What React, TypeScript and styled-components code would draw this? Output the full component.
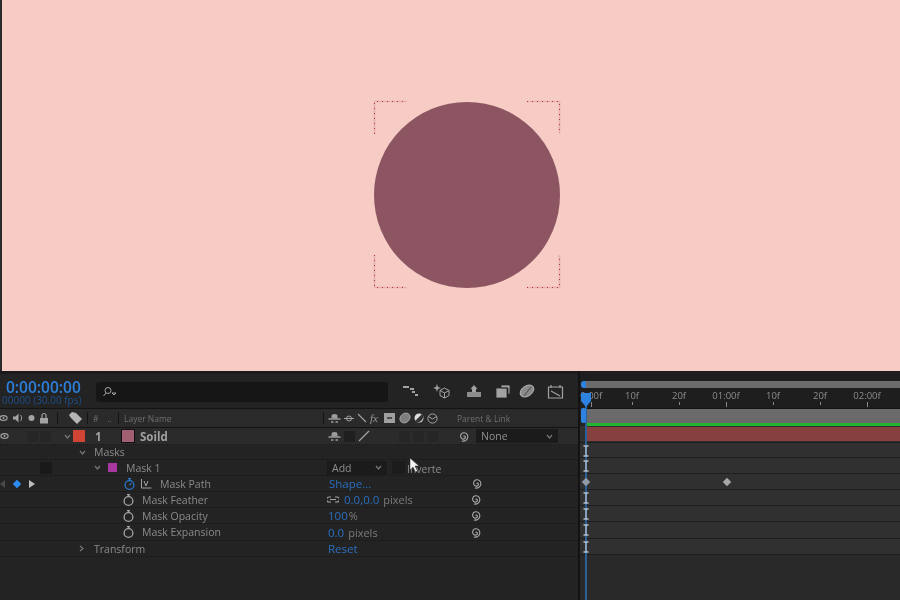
import React from 'react'
import styled, { createGlobalStyle } from 'styled-components'

const GlobalStyle = createGlobalStyle`
html, body { margin: 0; padding: 0; background: #232323; }
#root { width: 900px; height: 600px; overflow: hidden; }
`

const Page = styled.div`display: flex; flex-direction: column; width: 900px; height: 600px; font-family: "Open Sans", "Liberation Sans", sans-serif; color: #9b9b9b; overflow: hidden;`

const Viewer = styled.div`height: 371px; background: #f6ccc5; border-left: 2px solid #2a2a2a; display: flex; align-items: flex-start; padding: 101px 0 0 372px; box-sizing: border-box; flex: none;`
const Stage = styled.div`position: relative; width: 186px; height: 187px;`
const Circle = styled.div`width: 186px; height: 186px; margin-top: 1px; border-radius: 50%; background: #8c5561;`
const Brackets = styled.svg`position: absolute; left: 0; top: 0; overflow: visible;`

const Bottom = styled.div`flex: 1; display: flex; min-height: 0; background: #232323; filter: blur(0.4px);`
const LeftPanel = styled.div`width: 578px; flex: none; display: flex; flex-direction: column;`
const Divider = styled.div`width: 2px; flex: none; background: #131313;`
const RightPanel = styled.div`flex: 1; display: flex; flex-direction: column; position: relative; min-width: 0;`

const Toolbar = styled.div`height: 37px; flex: none; display: flex; align-items: flex-start; background: #232323; box-shadow: inset 0 3px 0 #1b1b1b;`
const TimeBox = styled.div`width: 96px; flex: none; padding: 8px 0 0 2px; box-sizing: border-box; display: flex; flex-direction: column;`
const TimeCode = styled.div`font-size: 15.5px; line-height: 16px; font-weight: 600; color: #2b80dc; padding-left: 4px; white-space: nowrap;`
const Frames = styled.div`font-size: 10px; line-height: 11px; color: #1d4f8c; white-space: nowrap;`
const Search = styled.div`width: 292px; height: 20px; margin-top: 11px; flex: none; border-radius: 3px; background: #161616; display: flex; align-items: center; padding-left: 6px; box-sizing: border-box;`
const ToolIcons = styled.div`display: flex; align-items: center; height: 18px; margin-top: 11px; padding-left: 6px;`
const ToolSlot = styled.div<{ $w: number }>`width: ${p => p.$w}px; flex: none; display: flex; justify-content: center;`

const HeaderRow = styled.div`height: 18px; flex: none; display: flex; align-items: center; background: #2a2a2a; border-top: 1px solid #131313; border-bottom: 1px solid #131313; font-size: 8.5px; color: #6f6f6f;`
const Slot = styled.div<{ $w: number; $pad?: number; $gap?: number }>`width: ${p => p.$w}px; flex: none; box-sizing: border-box; padding-left: ${p => p.$pad ?? 0}px; gap: ${p => p.$gap ?? 0}px; display: flex; align-items: center; white-space: nowrap;`
const Sep = styled.div`width: 1px; height: 12px; background: #141414; flex: none;`
const EyeClip = styled.div`margin-left: -1px; display: flex;`
const FxLabel = styled.span`font-style: italic; font-size: 11px; font-family: "Liberation Serif", serif; color: #9a9a9a; width: 11px;`

const Row = styled.div<{ $h?: number; $top?: boolean }>`height: ${p => p.$h ?? 16}px; flex: none; display: flex; align-items: center; box-sizing: border-box; border-bottom: 1px dotted #171717; font-size: 10.5px; color: #8f8f8f; background: ${p => (p.$top ? '#2b2b2b' : '#232323')};`
const Name = styled.span<{ $bold?: boolean }>`font-weight: ${p => (p.$bold ? 700 : 400)}; color: ${p => (p.$bold ? '#a0a0a0' : '#8b8b8b')}; font-size: ${p => (p.$bold ? 11.5 : 10.5)}px;`
const InvertLabel = styled(Name)`margin: 3px 0 0 2px;`
const Blue = styled.span`color: #2a6fc0; font-size: 11.5px;`
const Dim = styled.span<{ $gap?: number }>`color: #7c7c7c; margin-left: ${p => p.$gap ?? 4}px; font-size: 11px;`
const Box = styled.div<{ $c?: string; $s?: number }>`width: ${p => p.$s ?? 11}px; height: ${p => p.$s ?? 11}px; background: ${p => p.$c ?? '#1f1f1f'}; flex: none;`
const Swatch = styled(Box)`outline: 1px solid #111;`
const ActiveKey = styled(Box)`transform: rotate(45deg);`
const Dropdown = styled.div<{ $w: number }>`width: ${p => p.$w}px; height: 14px; flex: none; background: #1b1b1b; display: flex; align-items: center; justify-content: space-between; padding: 0 5px; box-sizing: border-box; color: #8f8f8f;`
const Cursor = styled.svg`position: absolute; left: 409px; top: 457px;`

const Scrubber = styled.div`height: 37px; flex: none; display: flex; flex-direction: column; background: #1e1e1e; padding-top: 10px; box-sizing: border-box;`
const NavBar = styled.div`height: 7px; flex: none; margin-left: 1px; background: #6b6b6b; border-left: 5px solid #2e83e0; border-radius: 3px 0 0 3px;`
const Ruler = styled.div`flex: 1; display: flex; overflow: hidden; font-size: 9.5px; color: #8d8d8d;`
const Tick = styled.div<{ $long?: boolean }>`width: 47px; flex: none; display: flex; flex-direction: column; align-items: center; line-height: 13px; margin-top: 1px;
&::after { content: ""; width: 1px; height: ${p => (p.$long ? 5 : 3)}px; background: #8a8a8a; }`
const FirstTick = styled(Tick)`width: 28.5px; padding-right: 6px; box-sizing: border-box;`
const WorkRow = styled.div`height: 18px; flex: none; background: #6a6a6a; border-top: 1px solid #131313; box-sizing: border-box; display: flex; flex-direction: column; justify-content: flex-end; margin-left: 6px;`
const GreenLine = styled.div`height: 3px; background: #22b534;`
const Track = styled.div<{ $h?: number }>`height: ${p => p.$h ?? 16}px; flex: none; background: #303030; border-bottom: 1px solid #1d1d1d; box-sizing: border-box; display: flex; position: relative; padding-left: 6px;`
const LayerBar = styled.div`flex: 1; background: #86403e; margin: 1px 0;`
const Playhead = styled.div`position: absolute; left: 5px; top: 22px; bottom: 0; width: 2px; background: #2b5f97;`
const PlayheadTop = styled.svg`position: absolute; left: 0; top: 22px;`
const WorkHandle = styled.div`position: absolute; left: 1px; top: 37px; width: 5px; height: 15px; background: #2e83e0; border-radius: 2px;`
const Lane = styled.div`flex: 1; background: #292929;`
const Beam = styled.svg`position: absolute; left: 3px; top: 2px; z-index: 1;`
const Key = styled.div<{ $x: number; $c?: string }>`position: absolute; left: ${p => p.$x}px; top: 5px; width: 6px; height: 6px; background: ${p => p.$c ?? '#a8a8a8'}; transform: rotate(45deg); z-index: 1;`

const Ic = ({ w = 14, h = 14, children, vb }: { w?: number; h?: number; vb?: string; children: React.ReactNode }) => (
  <svg width={w} height={h} viewBox={vb ?? `0 0 ${w} ${h}`} fill="none" stroke="#a3a3a3" strokeWidth="1.2" style={{ flex: 'none' }}>
    {children}
  </svg>
)

const Eye = () => (
  <Ic w={9} h={8}><ellipse cx="4.5" cy="4" rx="3.6" ry="2.4" /><circle cx="4.5" cy="4" r="1" fill="#a3a3a3" stroke="none" /></Ic>
)
const Chevron = ({ open = true }: { open?: boolean }) => (
  <Ic w={7} h={7}>{open ? <path d="M1 2l2.500 3L6 2" stroke="#777" /> : <path d="M2 1l3 2.500L2 6" stroke="#777" />}</Ic>
)
const Spiral = () => (
  <Ic w={13} h={13}><path d="M6.500 6.500c1-1 2.500 0 1.800 1.600-.8 1.600-4 1.400-4.600-.9C3 4.700 5 2.500 7.500 2.800c2.700.4 4 3 3 5.600-.9 2.200-3.400 3-5.600 2.600" stroke="#a8a8a8" strokeWidth="1.100" /></Ic>
)
const Stopwatch = ({ active = false }: { active?: boolean }) => {
  const c = active ? '#2a78cf' : '#a5a5a5'
  return (
    <Ic w={13} h={14}>
      <circle cx="6.500" cy="8" r="4.400" stroke={c} strokeWidth="1.300" />
      <path d="M5 1.600h3M6.500 2v1.600" stroke={c} />
      {active && <path d="M6.500 8l1.800-1.800" stroke={c} />}
    </Ic>
  )
}
const Shy = () => (
  <Ic w={13} h={10}>
    <path d="M3.500 5.500V3Q3.500 1 6.500 1T9.500 3V5.500z" fill="#9c9c9c" stroke="none" />
    <path d="M.5 6h12M3 9h2.500M7.500 9H10" stroke="#9c9c9c" strokeWidth="1.300" />
  </Ic>
)
const IBeam = () => (
  <Beam width="6" height="12" viewBox="0 0 6 12"><path d="M.5 1h5M.5 11h5M3 1v10" stroke="#b4c0cc" strokeWidth="1.300" /></Beam>
)

const rulerLabels = ['10f', '20f', '01:00f', '10f', '20f', '02:00f']

export default function App() {
  return (
    <Page>
      <GlobalStyle />
      <Viewer>
        <Stage>
          <Circle />
          <Brackets width="186" height="187" fill="none">
            <path d="M.5 33V.5H33M153 .5h32.500V33M.5 154v32.500H33M153 186.500h32.500V154" stroke="#dc9ea2" strokeWidth="1.600" opacity=".6" />
            <path d="M.5 33V.5H33M153 .5h32.500V33M.5 154v32.500H33M153 186.500h32.500V154" stroke="#b8303f" strokeWidth="1" strokeDasharray="1 4" />
          </Brackets>
        </Stage>
      </Viewer>
      <Bottom>
        <LeftPanel>
          <Toolbar>
            <TimeBox>
              <TimeCode>0:00:00:00</TimeCode>
              <Frames>00000 (30.00 fps)</Frames>
            </TimeBox>
            <Search>
              <Ic w={16} h={12}><circle cx="6" cy="4.500" r="3" strokeWidth="1" /><path d="M4 7L1.500 10M10 7h4l-2 2z" strokeWidth="1" /></Ic>
            </Search>
            <ToolIcons>
              <ToolSlot $w={32}><Ic w={17} h={14}><path d="M1 3h6M8 5h4M10 8h3M13 11h3" strokeWidth="1.800" /></Ic></ToolSlot>
              <ToolSlot $w={32}><Ic w={18} h={18}><path d="M4 2l1 3 3 1-3 1-1 3-1-3-3-1 3-1z" fill="#a3a3a3" stroke="none" /><path d="M11.500 6l4.500 2.500v5L11.500 16 7 13.500v-5zM7 8.500l4.500 2.500L16 8.500M11.500 11v5" strokeWidth="1" /></Ic></ToolSlot>
              <ToolSlot $w={32}><Ic w={16} h={14}><path d="M8 1l3.500 4h-7z" fill="#a3a3a3" stroke="none" /><path d="M6 5h4v3H6z" fill="#a3a3a3" stroke="none" /><path d="M1 8h14v5H1z" fill="#8c8c8c" stroke="none" /></Ic></ToolSlot>
              <ToolSlot $w={25}><Ic w={16} h={14}><path d="M6 1h9v9h-2V4H6zM1 4h11v10H1z" fill="#a3a3a3" stroke="#232323" strokeWidth=".8" /></Ic></ToolSlot>
              <ToolSlot $w={24}><Ic w={16} h={14}><ellipse cx="8" cy="7" rx="7.500" ry="5" transform="rotate(-35 8 7)" fill="#8a8a8a" stroke="#b0b0b0" strokeWidth="1" /><path d="M5 12L12 3" stroke="#555" /></Ic></ToolSlot>
              <ToolSlot $w={32}><Ic w={17} h={15}><path d="M1.500 3h14v11h-14zM4 1v3M13 1v3M4 7l9 5" strokeWidth="1.200" /></Ic></ToolSlot>
            </ToolIcons>
          </Toolbar>
          <HeaderRow>
            <Slot $w={57} $gap={4}>
              <EyeClip><Eye /></EyeClip>
              <Ic w={12} h={12}><path d="M1 4.500v3h2.500L6.500 10.500v-9L3.500 4.500z" fill="#a3a3a3" stroke="none" /><path d="M8.500 3c1.500 1.500 1.500 4.500 0 6" strokeWidth="1" /></Ic>
              <Ic w={7} h={8}><circle cx="3.500" cy="4" r="3" fill="#a3a3a3" stroke="none" /></Ic>
              <Ic w={10} h={12}><path d="M3 6V3.500a2 2 0 014 0V6" /><rect x="1" y="6" width="8" height="5.500" fill="#a3a3a3" stroke="none" /></Ic>
            </Slot>
            <Sep />
            <Slot $w={29} $pad={11}><Ic w={13} h={13}><path d="M0 3l3-3 4 1 6 6-5 5-6-6z" fill="#b5b5b5" stroke="none" /></Ic></Slot>
            <Sep />
            <Slot $w={30} $pad={5}>#&nbsp;&nbsp;&nbsp;&nbsp;..</Slot>
            <Sep />
            <Slot $w={204} $pad={5}>Layer Name</Slot>
            <Sep />
            <Slot $w={133} $pad={4} $gap={3}>
              <Shy />
              <Ic w={10} h={9}><circle cx="5" cy="4.500" r="2.500" strokeWidth="1" /><path d="M0 4.500h10" strokeWidth="1" /></Ic>
              <Ic w={10} h={10}><path d="M1 1l8 8" strokeWidth="1.100" /></Ic>
              <FxLabel>fx</FxLabel>
              <Ic w={12} h={12}><rect x="0" y="1" width="11" height="10" fill="#a0a0a0" stroke="none" /><path d="M3 6h5" stroke="#333" strokeWidth="1.500" /></Ic>
              <Ic w={12} h={12}><ellipse cx="6" cy="6" rx="5.500" ry="4.500" transform="rotate(-40 6 6)" fill="#7e7e7e" stroke="#aaa" strokeWidth=".8" /></Ic>
              <Ic w={10} h={10}><circle cx="5" cy="5" r="4.500" fill="#ddd" stroke="none" /><path d="M1 8l7-7a5 5 0 01-7 7z" fill="#333" stroke="none" /></Ic>
              <Ic w={11} h={11}><circle cx="5.500" cy="5.500" r="4.600" strokeWidth="1" /><path d="M1.500 3.500L5.500 6l4-2.500" strokeWidth="1" /></Ic>
            </Slot>
            <Slot $w={120}>Parent &amp; Link</Slot>
          </HeaderRow>
          <Row $h={17} $top>
            <Slot $w={27}><Eye /></Slot>
            <Slot $w={37} $gap={2}><Box $c="#262626" /><Box $c="#262626" /></Slot>
            <Slot $w={9}><Chevron /></Slot>
            <Slot $w={22}><Box $c="#cf4435" $s={12} /></Slot>
            <Slot $w={27}><Name $bold>1</Name></Slot>
            <Slot $w={18}><Swatch $c="#a35f72" $s={12} /></Slot>
            <Slot $w={188}><Name $bold>Soild</Name></Slot>
            <Slot $w={71} $gap={3}>
              <Shy />
              <Box $c="#1f1f1f" />
              <Ic w={12} h={12}><path d="M1 11L11 1" strokeWidth="1.300" /></Ic>
            </Slot>
            <Slot $w={58} $gap={3}><Box $c="#262626" /><Box $c="#262626" /><Box $c="#262626" /></Slot>
            <Slot $w={19}><Spiral /></Slot>
            <Dropdown $w={82}>None<Chevron /></Dropdown>
          </Row>
          <Row $h={15}>
            <Slot $w={79} />
            <Slot $w={15}><Chevron /></Slot>
            <Name>Masks</Name>
          </Row>
          <Row $h={16}>
            <Slot $w={40} />
            <Slot $w={54}><Box $c="#191919" $s={12} /></Slot>
            <Slot $w={14}><Chevron /></Slot>
            <Slot $w={18}><Box $c="#a8389f" $s={9} /></Slot>
            <Slot $w={201}><Name>Mask 1</Name></Slot>
            <Dropdown $w={60}>Add<Chevron /></Dropdown>
            <Slot $w={5} />
            <Box $c="#1c1c1c" $s={13} />
            <InvertLabel>Inverte</InvertLabel>
          </Row>
          <Row>
            <Slot $w={14}><Ic w={6} h={8}><path d="M5 0v8L0 4z" fill="#4a4a4a" stroke="none" /></Ic></Slot>
            <Slot $w={15}><ActiveKey $c="#2c8cf0" $s={6} /></Slot>
            <Slot $w={94}><Ic w={6} h={8}><path d="M0 0v8l6-4z" fill="#bdbdbd" stroke="none" /></Ic></Slot>
            <Slot $w={17}><Stopwatch active /></Slot>
            <Slot $w={20}><Ic w={13} h={12}><path d="M1.500 1v9h10M4 3l2 5 2-5" strokeWidth="1" /></Ic></Slot>
            <Slot $w={169}><Name>Mask Path</Name></Slot>
            <Slot $w={141}><Blue>Shape...</Blue></Slot>
            <Spiral />
          </Row>
          <Row>
            <Slot $w={122} />
            <Slot $w={20}><Stopwatch /></Slot>
            <Slot $w={185}><Name>Mask Feather</Name></Slot>
            <Slot $w={17}><Ic w={12} h={7}><path d="M4 1H2a2.500 2.500 0 000 5h2M8 1h2a2.500 2.500 0 010 5H8M3 3.500h6" strokeWidth="1.200" /></Ic></Slot>
            <Slot $w={125}><Blue>0.0,0.0</Blue><Dim>pixels</Dim></Slot>
            <Spiral />
          </Row>
          <Row>
            <Slot $w={122} />
            <Slot $w={20}><Stopwatch /></Slot>
            <Slot $w={186}><Name>Mask Opacity</Name></Slot>
            <Slot $w={141}><Blue>100</Blue><Dim $gap={1}>%</Dim></Slot>
            <Spiral />
          </Row>
          <Row $h={17}>
            <Slot $w={122} />
            <Slot $w={20}><Stopwatch /></Slot>
            <Slot $w={186}><Name>Mask Expansion</Name></Slot>
            <Slot $w={141}><Blue>0.0</Blue><Dim>pixels</Dim></Slot>
            <Spiral />
          </Row>
          <Row>
            <Slot $w={78} />
            <Slot $w={16}><Chevron open={false} /></Slot>
            <Slot $w={234}><Name>Transform</Name></Slot>
            <Blue>Reset</Blue>
          </Row>
        </LeftPanel>
        <Divider />
        <RightPanel>
          <Scrubber>
            <NavBar />
            <Ruler>
              <FirstTick $long>0:00f</FirstTick>
              {rulerLabels.map((label, i) => (
                <Tick key={i} $long={label.includes(':')}>{label}</Tick>
              ))}
            </Ruler>
          </Scrubber>
          <WorkRow><GreenLine /></WorkRow>
          <Track $h={17}><LayerBar /></Track>
          <Track $h={15}><IBeam /></Track>
          <Track><IBeam /></Track>
          <Track>
            <Key $x={3} $c="#8e9aa6" />
            <Key $x={144} />
          </Track>
          <Track><IBeam /></Track>
          <Track><IBeam /></Track>
          <Track $h={17}><IBeam /></Track>
          <Track><IBeam /></Track>
          <Lane />
          <Playhead />
          <PlayheadTop width="12" height="15" viewBox="0 0 12 15"><path d="M1 0h10v8l-5 6-5-6z" fill="#2e83e0" /></PlayheadTop>
          <WorkHandle />
        </RightPanel>
      </Bottom>
      <Cursor width="12" height="16" viewBox="0 0 12 16"><path d="M1 1v12l3-3 2.500 5 2-1-2.500-5h4z" fill="#f2f2f2" stroke="#333" strokeWidth=".5" /></Cursor>
    </Page>
  )
}
